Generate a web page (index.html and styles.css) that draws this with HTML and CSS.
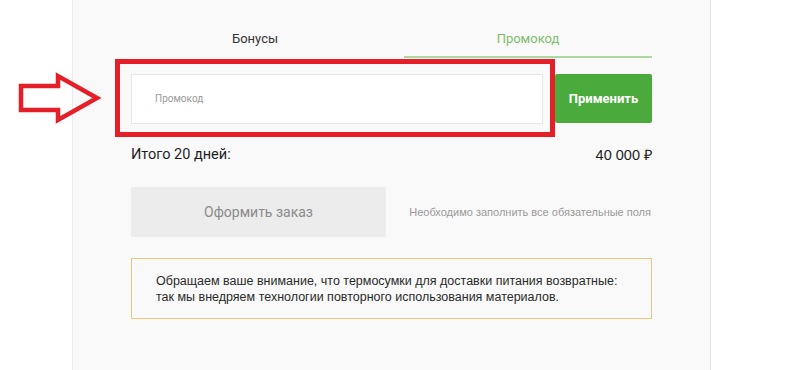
FILE: index.html
```html
<!DOCTYPE html>
<html lang="ru">
<head>
<meta charset="utf-8">
<title>Промокод</title>
<link rel="stylesheet" href="styles.css">
</head>
<body>
<div class="page">
  <div class="panel">
    <div class="tabs">
      <div class="tab">Бонусы</div>
      <div class="tab active">Промокод</div>
    </div>
    <div class="promo-row">
      <div class="promo-input">Промокод</div>
      <button class="apply">Применить</button>
    </div>
    <div class="total-row">
      <span class="total-label">Итого 20 дней:</span>
      <span class="total-sum">40 000 ₽</span>
    </div>
    <div class="order-row">
      <button class="order">Оформить заказ</button>
      <span class="hint">Необходимо заполнить все обязательные поля</span>
    </div>
    <div class="notice">Обращаем ваше внимание, что термосумки для доставки питания возвратные:<br>так мы внедряем технологии повторного использования материалов.</div>
  </div>
  <svg class="arrow" width="110" height="140" viewBox="0 0 110 140">
    <polygon points="21,86 58,86 58,76 97,98 58,120 58,110 21,110" fill="none" stroke="#e51f27" stroke-width="4.5" stroke-linejoin="miter"/>
  </svg>
  <div class="highlight"></div>
</div>
</body>
</html>
```

FILE: styles.css
```css
html, body {
  margin: 0;
  padding: 0;
  background: #ffffff;
}
.page {
  position: relative;
  width: 800px;
  height: 370px;
  overflow: hidden;
  font-family: Roboto, "Liberation Sans", sans-serif;
}
.panel {
  margin-left: 72px;
  width: 639px;
  height: 370px;
  box-sizing: border-box;
  background: #f9f9f9;
  border-left: 1px solid #ececec;
  border-right: 1px solid #e2e2e2;
  padding: 0 58px 0 58px;
}
.tabs {
  display: grid;
  grid-template-columns: 248px 248px;
  column-gap: 25px;
}
.tab {
  text-align: center;
  font-size: 13px;
  line-height: 18px;
  color: #333333;
  padding: 30px 0 8px;
  border-bottom: 2px solid transparent;
}
.tab.active {
  color: #7dbd6c;
  border-bottom-color: #acd7a0;
}
.promo-row {
  display: flex;
  margin-top: 16px;
  gap: 12px;
}
.promo-input {
  flex: 1;
  height: 50px;
  box-sizing: border-box;
  background: #ffffff;
  border: 1px solid #e8e8e8;
  padding-left: 23px;
  font-size: 10px;
  line-height: 48px;
  color: #9a9a9a;
}
.apply {
  width: 97px;
  height: 49px;
  border: none;
  border-radius: 2px;
  background: #4aab3c;
  color: #ffffff;
  font-family: Roboto, "Liberation Sans", sans-serif;
  font-weight: 700;
  font-size: 13px;
  padding: 0;
}
.total-row {
  display: flex;
  justify-content: space-between;
  margin-top: 21px;
  line-height: 20px;
  font-size: 14.5px;
  color: #1e1e1e;
}
.total-sum {
  font-family: "Liberation Sans", Arial, sans-serif;
  font-size: 14.5px;
}
.order-row {
  display: flex;
  align-items: center;
  justify-content: space-between;
  margin-top: 22px;
}
.order {
  width: 255px;
  height: 50px;
  border: none;
  background: #ececec;
  color: #8a8a8a;
  font-family: Roboto, "Liberation Sans", sans-serif;
  font-size: 14px;
  padding: 0;
}
.hint {
  font-family: "Liberation Sans", Arial, sans-serif;
  font-size: 11px;
  color: #999999;
  padding-right: 1px;
}
.notice {
  margin-top: 21px;
  width: 521px;
  box-sizing: border-box;
  border: 1px solid #f2c57c;
  padding: 14px 20px 13px 24px;
  font-family: "Liberation Sans", Arial, sans-serif;
  font-size: 12.5px;
  line-height: 16px;
  color: #2a2a2a;
}
.arrow {
  position: absolute;
  left: 0;
  top: 0;
}
.highlight {
  position: absolute;
  left: 115px;
  top: 59px;
  width: 440px;
  height: 78px;
  box-sizing: border-box;
  border: 5px solid #e51f27;
}
```
